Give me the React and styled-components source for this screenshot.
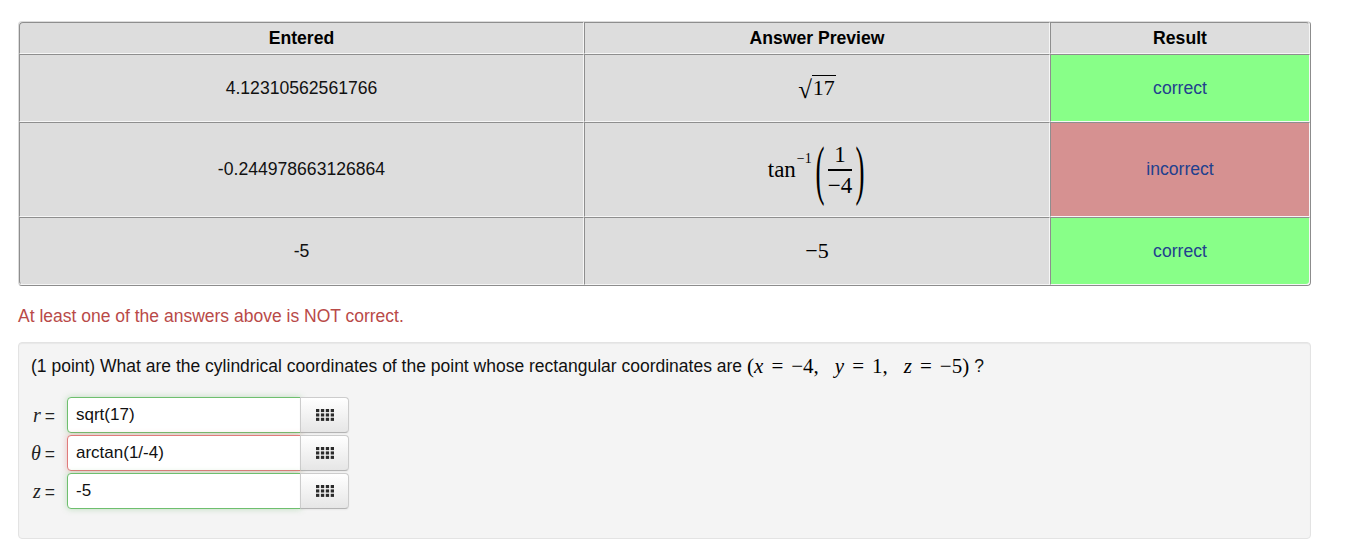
import React from 'react';
import styled, { createGlobalStyle } from 'styled-components';

const GlobalStyle = createGlobalStyle`
  body {
    margin: 0;
    background: #fff;
    font-family: "Liberation Sans", Arial, sans-serif;
    color: #222;
  }
`;

const Page = styled.div`
  padding: 21px 0 0 18px;
  width: 1293px;
`;

const Results = styled.table`
  width: 1293px;
  border-collapse: separate;
  border-spacing: 0;
  border: 1px solid;
  border-color: #dcdcdc #8c8c8c #8c8c8c #dcdcdc;
  border-radius: 4px;
  table-layout: fixed;
  font-size: 17.6px;
`;

const Head = styled.th`
  box-sizing: border-box;
  height: ${p => p.h}px;
  width: ${p => p.w}px;
  padding: 0;
  background: #dddddd;
  color: #000;
  font-weight: bold;
  text-align: center;
  border: 1px solid;
  border-color: #8e8e8e #f6f6f6 #f6f6f6 #8e8e8e;
  border-radius: ${p => p.radius || '0'};
`;

const Cell = styled.td`
  box-sizing: border-box;
  height: ${p => p.h}px;
  padding: 0;
  text-align: center;
  vertical-align: middle;
  color: ${p => (p.status ? '#22408e' : '#111')};
  background: ${p =>
    p.status === 'ok' ? '#88ff88' : p.status === 'bad' ? '#d69191' : '#dddddd'};
  border: 1px solid;
  border-color: #8e8e8e #f6f6f6 #f6f6f6 #8e8e8e;
  border-radius: ${p => p.radius || '0'};
`;

const Math = styled.span`
  font-family: "Liberation Serif", "Times New Roman", serif;
  font-size: ${p => p.size || 22}px;
  color: #000;
  display: inline-flex;
  align-items: center;
  white-space: nowrap;
`;

const Var = styled.i`
  font-family: "Liberation Serif", "Times New Roman", serif;
  font-style: italic;
`;

const Rel = styled.span`
  margin: 0 ${p => p.space || 8}px;
`;

const Radical = styled.span`
  font-size: 25px;
  line-height: 1;
  transform: translateY(2px);
`;

const Radicand = styled.span`
  border-top: 1.4px solid #000;
  line-height: 1.05;
  padding: 0 1px;
`;

const Sup = styled.sup`
  font-size: 14px;
  align-self: flex-start;
  margin: 9px 2px 0 1px;
  line-height: 1;
`;

const Paren = styled.span`
  font-size: 30px;
  font-weight: 300;
  display: inline-block;
  transform: scale(0.9, 2.2);
  line-height: 1;
  margin: 0 1px;
`;

const Fraction = styled.span`
  display: inline-flex;
  flex-direction: column;
  align-items: center;
  line-height: 1;
  font-size: 23px;
  margin: 0 2px;
`;

const Bar = styled.span`
  align-self: stretch;
  height: 0;
  border-top: 2.5px solid #000;
  margin: 3px 0 3px;
`;

const Notice = styled.div`
  margin-top: 20px;
  color: #b94a48;
  font-size: 17.5px;
  line-height: 20px;
`;

const Well = styled.div`
  margin-top: 16px;
  box-sizing: border-box;
  height: 197px;
  padding: 11px 12px 0 12px;
  background: #f4f4f4;
  border: 1px solid #e3e3e3;
  border-radius: 4px;
  box-shadow: inset 0 1px 1px rgba(0, 0, 0, 0.05);
`;

const Question = styled.p`
  margin: 0;
  font-size: 17.5px;
  line-height: 24px;
  color: #111;
  display: flex;
  align-items: center;
  gap: 5px;
`;

const Answers = styled.div`
  margin-top: 19px;
  display: grid;
  grid-template-columns: 36px 234px 49px;
  row-gap: 2px;
  align-items: center;
`;

const Label = styled.label`
  justify-self: end;
  padding-right: 12px;
  font-size: 17.5px;
  color: #222;
  display: flex;
  align-items: baseline;
  gap: 4px;

  i {
    font-size: 20px;
  }
`;

const Field = styled.input`
  box-sizing: border-box;
  height: 36px;
  width: 234px;
  padding: 0 8px;
  font-family: "Liberation Sans", Arial, sans-serif;
  font-size: 17px;
  color: #111;
  background: #fff;
  border: 1px solid ${p => (p.ok ? '#6ebf6e' : '#e07a7a')};
  border-radius: 4px 0 0 4px;
  box-shadow: 0 0 6px ${p => (p.ok ? 'rgba(90, 180, 90, 0.35)' : 'rgba(220, 90, 90, 0.35)')};
  outline: none;
`;

const KeyButton = styled.button`
  box-sizing: border-box;
  height: 36px;
  width: 49px;
  margin-left: -1px;
  display: flex;
  align-items: center;
  justify-content: center;
  background: linear-gradient(#ffffff, #e6e6e6);
  border: 1px solid #cccccc;
  border-bottom-color: #b3b3b3;
  border-radius: 0 4px 4px 0;
  box-shadow: inset 0 1px 0 rgba(255, 255, 255, 0.2), 0 1px 2px rgba(0, 0, 0, 0.05);
  padding: 0;
`;

const KeypadIcon = () => (
  <svg width="18" height="12" viewBox="0 0 18 12">
    {[0, 4.4, 8.8].map(y =>
      [0, 4.9, 9.8, 14.7].map(x => (
        <rect key={`${x}-${y}`} x={x} y={y} width="3.3" height="3.1" fill="#2b2b2b" />
      ))
    )}
  </svg>
);

const rows = [
  { entered: '4.12310562561766', h: 68, status: 'ok', text: 'correct', preview: 'sqrt' },
  { entered: '-0.244978663126864', h: 95, status: 'bad', text: 'incorrect', preview: 'tan' },
  { entered: '-5', h: 68, status: 'ok', text: 'correct', preview: 'neg' },
];

const Preview = ({ kind }) => {
  if (kind === 'sqrt') {
    return (
      <Math>
        <Radical>√</Radical>
        <Radicand>17</Radicand>
      </Math>
    );
  }
  if (kind === 'tan') {
    return (
      <Math size={23}>
        tan<Sup>−1</Sup>
        <Paren>(</Paren>
        <Fraction>
          <span>1</span>
          <Bar />
          <span>−4</span>
        </Fraction>
        <Paren>)</Paren>
      </Math>
    );
  }
  return <Math>−5</Math>;
};

const answers = [
  { name: 'r', value: 'sqrt(17)', ok: true },
  { name: 'θ', value: 'arctan(1/-4)', ok: false },
  { name: 'z', value: '-5', ok: true },
];

export default function App() {
  return (
    <Page>
      <GlobalStyle />
      <Results>
        <thead>
          <tr>
            <Head h={32} w={565} radius="4px 0 0 0">Entered</Head>
            <Head h={32} w={466}>Answer Preview</Head>
            <Head h={32} w={260} radius="0 4px 0 0">Result</Head>
          </tr>
        </thead>
        <tbody>
          {rows.map((r, i) => (
            <tr key={i}>
              <Cell h={r.h} radius={i === 2 ? '0 0 0 4px' : undefined}>{r.entered}</Cell>
              <Cell h={r.h}>
                <Preview kind={r.preview} />
              </Cell>
              <Cell h={r.h} status={r.status} radius={i === 2 ? '0 0 4px 0' : undefined}>
                {r.text}
              </Cell>
            </tr>
          ))}
        </tbody>
      </Results>

      <Notice>At least one of the answers above is NOT correct.</Notice>

      <Well>
        <Question>
          (1 point) What are the cylindrical coordinates of the point whose rectangular coordinates are
          <Math size={21}>
            (<Var>x</Var>
            <Rel>=</Rel>−4,<Rel space={8} />
            <Var>y</Var>
            <Rel>=</Rel>1,<Rel space={8} />
            <Var>z</Var>
            <Rel>=</Rel>−5)
          </Math>
          ?
        </Question>
        <Answers>
          {answers.map(a => (
            <React.Fragment key={a.name}>
              <Label>
                <Var>{a.name}</Var>=
              </Label>
              <Field ok={a.ok} defaultValue={a.value} />
              <KeyButton type="button">
                <KeypadIcon />
              </KeyButton>
            </React.Fragment>
          ))}
        </Answers>
      </Well>
    </Page>
  );
}
